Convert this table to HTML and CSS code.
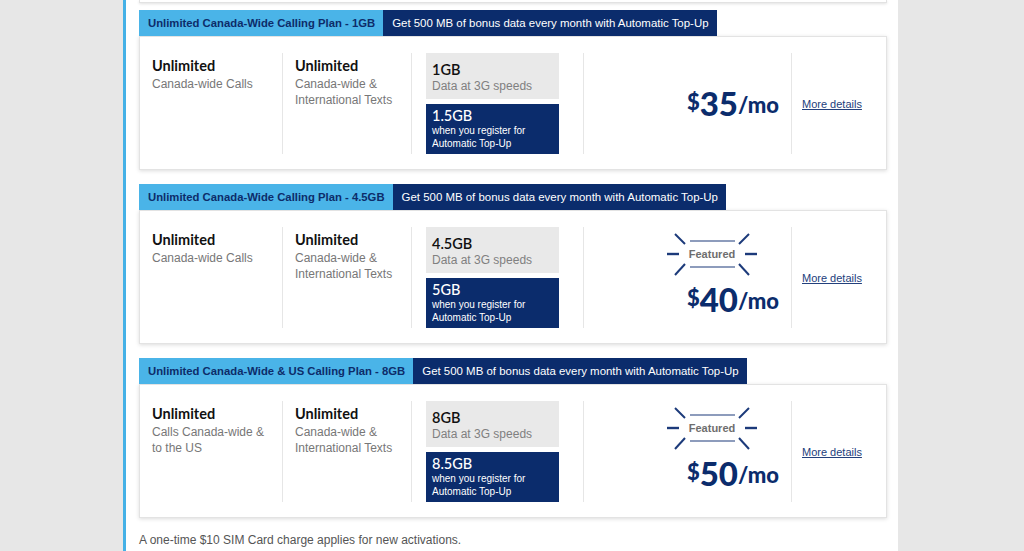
FILE: index.html
```html
<!DOCTYPE html>
<html lang="en">
<head>
<meta charset="utf-8">
<title>Plans</title>
<link rel="stylesheet" href="styles.css">
</head>
<body>
<div class="page">
  <div class="gutter"></div>
  <main class="panel">
    <div class="prev-edge"></div>
    <div class="plans">
      <section class="plan">
        <div class="plan-tabs">
          <span class="tab tab-name">Unlimited Canada-Wide Calling Plan - 1GB</span>
          <span class="tab tab-promo">Get 500 MB of bonus data every month with Automatic Top-Up</span>
        </div>
        <div class="plan-body">
          <div class="col col-a">
            <div class="feat-title">Unlimited</div>
            <div class="feat-sub">Canada-wide Calls</div>
          </div>
          <div class="col col-b">
            <div class="feat-title">Unlimited</div>
            <div class="feat-sub">Canada-wide &amp;<br>International Texts</div>
          </div>
          <div class="col col-data">
            <div class="data-box data-base">
              <div class="data-amt">1GB</div>
              <div class="data-sub">Data at 3G speeds</div>
            </div>
            <div class="data-box data-bonus">
              <div class="data-amt">1.5GB</div>
              <div class="data-note">when you register for<br>Automatic Top-Up</div>
            </div>
          </div>
          <div class="col col-price">
            <div class="price"><span class="cur">$</span><span class="amt">35</span><span class="per">/mo</span></div>
          </div>
          <div class="col col-more"><a class="more" href="#">More details</a></div>
        </div>
      </section>

      <section class="plan">
        <div class="plan-tabs">
          <span class="tab tab-name">Unlimited Canada-Wide Calling Plan - 4.5GB</span>
          <span class="tab tab-promo">Get 500 MB of bonus data every month with Automatic Top-Up</span>
        </div>
        <div class="plan-body">
          <div class="col col-a">
            <div class="feat-title">Unlimited</div>
            <div class="feat-sub">Canada-wide Calls</div>
          </div>
          <div class="col col-b">
            <div class="feat-title">Unlimited</div>
            <div class="feat-sub">Canada-wide &amp;<br>International Texts</div>
          </div>
          <div class="col col-data">
            <div class="data-box data-base">
              <div class="data-amt">4.5GB</div>
              <div class="data-sub">Data at 3G speeds</div>
            </div>
            <div class="data-box data-bonus">
              <div class="data-amt">5GB</div>
              <div class="data-note">when you register for<br>Automatic Top-Up</div>
            </div>
          </div>
          <div class="col col-price">
            <div class="featured">
              <svg class="featured-art" width="90" height="44" viewBox="0 0 90 44" aria-hidden="true">
                <g stroke="#1c3a7a" fill="none" stroke-linecap="butt">
                  <line x1="23" y1="9" x2="68" y2="9" stroke-width="1.2"/>
                  <line x1="23" y1="35" x2="68" y2="35" stroke-width="1.2"/>
                  <line x1="0" y1="22" x2="12" y2="22" stroke-width="2.4"/>
                  <line x1="78" y1="22" x2="90" y2="22" stroke-width="2.4"/>
                  <line x1="8" y1="2" x2="18" y2="12" stroke-width="2"/>
                  <line x1="82" y1="2" x2="72" y2="12" stroke-width="2"/>
                  <line x1="8" y1="43" x2="18" y2="32" stroke-width="2"/>
                  <line x1="82" y1="43" x2="72" y2="32" stroke-width="2"/>
                </g>
              </svg>
              <span class="featured-label">Featured</span>
            </div>
            <div class="price"><span class="cur">$</span><span class="amt">40</span><span class="per">/mo</span></div>
          </div>
          <div class="col col-more"><a class="more" href="#">More details</a></div>
        </div>
      </section>

      <section class="plan">
        <div class="plan-tabs">
          <span class="tab tab-name">Unlimited Canada-Wide &amp; US Calling Plan - 8GB</span>
          <span class="tab tab-promo">Get 500 MB of bonus data every month with Automatic Top-Up</span>
        </div>
        <div class="plan-body">
          <div class="col col-a">
            <div class="feat-title">Unlimited</div>
            <div class="feat-sub">Calls Canada-wide &amp;<br>to the US</div>
          </div>
          <div class="col col-b">
            <div class="feat-title">Unlimited</div>
            <div class="feat-sub">Canada-wide &amp;<br>International Texts</div>
          </div>
          <div class="col col-data">
            <div class="data-box data-base">
              <div class="data-amt">8GB</div>
              <div class="data-sub">Data at 3G speeds</div>
            </div>
            <div class="data-box data-bonus">
              <div class="data-amt">8.5GB</div>
              <div class="data-note">when you register for<br>Automatic Top-Up</div>
            </div>
          </div>
          <div class="col col-price">
            <div class="featured">
              <svg class="featured-art" width="90" height="44" viewBox="0 0 90 44" aria-hidden="true">
                <g stroke="#1c3a7a" fill="none" stroke-linecap="butt">
                  <line x1="23" y1="9" x2="68" y2="9" stroke-width="1.2"/>
                  <line x1="23" y1="35" x2="68" y2="35" stroke-width="1.2"/>
                  <line x1="0" y1="22" x2="12" y2="22" stroke-width="2.4"/>
                  <line x1="78" y1="22" x2="90" y2="22" stroke-width="2.4"/>
                  <line x1="8" y1="2" x2="18" y2="12" stroke-width="2"/>
                  <line x1="82" y1="2" x2="72" y2="12" stroke-width="2"/>
                  <line x1="8" y1="43" x2="18" y2="32" stroke-width="2"/>
                  <line x1="82" y1="43" x2="72" y2="32" stroke-width="2"/>
                </g>
              </svg>
              <span class="featured-label">Featured</span>
            </div>
            <div class="price"><span class="cur">$</span><span class="amt">50</span><span class="per">/mo</span></div>
          </div>
          <div class="col col-more"><a class="more" href="#">More details</a></div>
        </div>
      </section>
    </div>
    <p class="footnote">A one-time $10 SIM Card charge applies for new activations.</p>
  </main>
  <div class="gutter-right"></div>
</div>
</body>
</html>
```

FILE: styles.css
```css
* { box-sizing: border-box; }

html, body {
  margin: 0;
  padding: 0;
}

body {
  background: #e7e7e7;
  font-family: "Liberation Sans", Arial, sans-serif;
  color: #333;
  overflow: hidden;
}

.page {
  display: flex;
  height: 551px;
}

.gutter {
  width: 123px;
  flex: none;
}

.gutter-right {
  flex: 1;
}

.panel {
  width: 775px;
  flex: none;
  background: #fff;
  border-left: 3px solid #45b1e6;
  padding: 0 11px 0 13px;
}

.prev-edge {
  height: 3px;
  border: 1px solid #e2e2e2;
  border-top: none;
  box-shadow: 0 1px 3px rgba(0, 0, 0, 0.12);
}

.plans {
  margin-top: 7px;
  display: flex;
  flex-direction: column;
  gap: 14px;
}

.plan-tabs {
  display: flex;
  height: 26px;
}

.tab {
  display: flex;
  align-items: center;
  flex: none;
  white-space: nowrap;
}

.tab-name {
  background: #4ab4e8;
  color: #0d2c6a;
  font-weight: bold;
  font-size: 11.3px;
  padding: 0 8px 0 9px;
}

.tab-promo {
  background: #0b2c6c;
  color: #fff;
  font-size: 11.45px;
  padding: 0 8px 0 9px;
}

.plan-body {
  display: flex;
  border: 1px solid #e3e3e3;
  box-shadow: 0 1px 4px rgba(0, 0, 0, 0.14);
  padding: 16px 0 15px;
  background: #fff;
}

.col {
  flex: none;
}

.col + .col {
  border-left: 1px solid #e6e6e6;
}

.col-a {
  width: 142px;
  padding: 3px 0 0 12px;
}

.col-b {
  width: 129px;
  padding: 3px 0 0 12px;
}

.feat-title {
  font-family: "Lato", "Liberation Sans", sans-serif;
  font-weight: 700;
  font-size: 14.5px;
  line-height: 20px;
  color: #111;
}

.feat-sub {
  font-size: 12px;
  line-height: 16px;
  color: #777;
}

.col-data {
  width: 172px;
  padding-left: 14px;
  display: flex;
  flex-direction: column;
  gap: 5px;
}

.data-box {
  width: 133px;
  padding: 0 6px;
}

.data-base {
  background: #e9e9e9;
  height: 46px;
  padding-top: 8px;
}

.data-bonus {
  background: #0b2c6c;
  color: #fff;
  height: 50px;
  padding-top: 3px;
}

.data-amt {
  font-family: "Lato", "Liberation Sans", sans-serif;
  font-weight: 600;
  font-size: 14.5px;
  line-height: 17px;
  color: #111;
}

.data-bonus .data-amt {
  color: #fff;
  font-weight: 500;
}

.data-sub {
  font-size: 12px;
  line-height: 16px;
  color: #808080;
}

.data-note {
  font-size: 10px;
  line-height: 13px;
  color: #fff;
}

.col-price {
  width: 208px;
  padding-right: 12px;
  display: flex;
  flex-direction: column;
  align-items: flex-end;
  justify-content: center;
}

.featured {
  position: relative;
  width: 90px;
  height: 44px;
  margin-right: 22px;
  margin-bottom: 2px;
  margin-top: -2px;
}

.featured-art {
  display: block;
}

.featured-label {
  position: absolute;
  left: 0;
  right: 0;
  top: 15px;
  text-align: center;
  font-size: 11px;
  line-height: 14px;
  font-weight: bold;
  color: #6e6e6e;
}

.price {
  font-family: "Lato", "Liberation Sans", sans-serif;
  font-weight: 900;
  color: #0b2c6c;
  white-space: nowrap;
  line-height: 32px;
  margin-top: 4px;
}

.cur {
  font-size: 22px;
  vertical-align: 6px;
}

.amt {
  font-size: 33px;
}

.per {
  font-size: 22px;
  vertical-align: 3px;
}

.col-more {
  flex: 1;
  padding-left: 10px;
  display: flex;
  align-items: center;
}

.more {
  font-size: 11px;
  color: #23407c;
  text-decoration: underline;
}

.footnote {
  margin: 15px 0 0;
  font-size: 12px;
  line-height: 14px;
  color: #555;
}
```
